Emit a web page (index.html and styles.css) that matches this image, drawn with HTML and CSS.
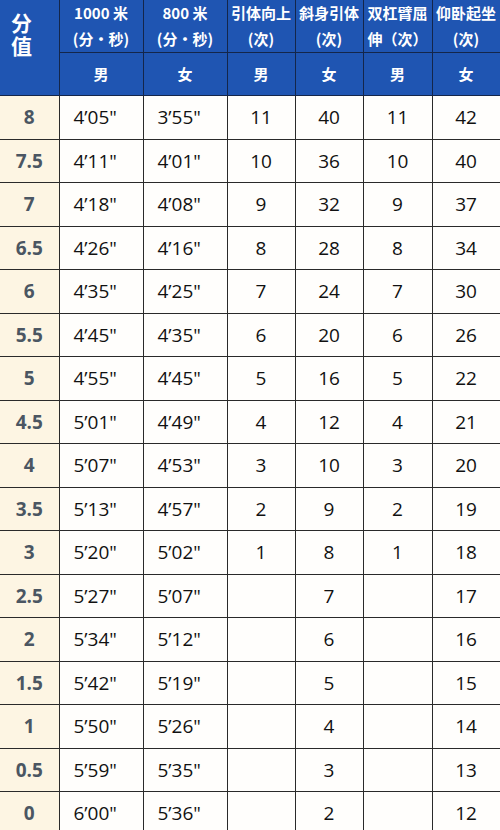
FILE: index.html
```html
<!DOCTYPE html>
<html lang="zh">
<head>
<meta charset="utf-8">
<link rel="stylesheet" href="styles.css">
</head>
<body>
<table class="score">
  <colgroup>
    <col class="c0"><col class="c1"><col class="c2"><col class="c3"><col class="c4"><col class="c5"><col class="c6">
  </colgroup>
  <thead>
    <tr class="h1">
      <th rowspan="2" class="corner">分<br>值</th>
      <th>1000 米<br>(分•秒)</th>
      <th>800 米<br>(分•秒)</th>
      <th>引体向上<br>(次)</th>
      <th>斜身引体<br>(次)</th>
      <th>双杠臂屈<br>伸（次）</th>
      <th>仰卧起坐<br>(次)</th>
    </tr>
    <tr class="h2">
      <th>男</th><th>女</th><th>男</th><th>女</th><th>男</th><th>女</th>
    </tr>
  </thead>
  <tbody>
    <tr><td class="pt">8</td><td class="t">4’05"</td><td class="t">3’55"</td><td>11</td><td>40</td><td>11</td><td>42</td></tr>
    <tr><td class="pt">7.5</td><td class="t">4’11"</td><td class="t">4’01"</td><td>10</td><td>36</td><td>10</td><td>40</td></tr>
    <tr><td class="pt">7</td><td class="t">4’18"</td><td class="t">4’08"</td><td>9</td><td>32</td><td>9</td><td>37</td></tr>
    <tr><td class="pt">6.5</td><td class="t">4’26"</td><td class="t">4’16"</td><td>8</td><td>28</td><td>8</td><td>34</td></tr>
    <tr><td class="pt">6</td><td class="t">4’35"</td><td class="t">4’25"</td><td>7</td><td>24</td><td>7</td><td>30</td></tr>
    <tr><td class="pt">5.5</td><td class="t">4’45"</td><td class="t">4’35"</td><td>6</td><td>20</td><td>6</td><td>26</td></tr>
    <tr><td class="pt">5</td><td class="t">4’55"</td><td class="t">4’45"</td><td>5</td><td>16</td><td>5</td><td>22</td></tr>
    <tr><td class="pt">4.5</td><td class="t">5’01"</td><td class="t">4’49"</td><td>4</td><td>12</td><td>4</td><td>21</td></tr>
    <tr><td class="pt">4</td><td class="t">5’07"</td><td class="t">4’53"</td><td>3</td><td>10</td><td>3</td><td>20</td></tr>
    <tr><td class="pt">3.5</td><td class="t">5’13"</td><td class="t">4’57"</td><td>2</td><td>9</td><td>2</td><td>19</td></tr>
    <tr><td class="pt">3</td><td class="t">5’20"</td><td class="t">5’02"</td><td>1</td><td>8</td><td>1</td><td>18</td></tr>
    <tr><td class="pt">2.5</td><td class="t">5’27"</td><td class="t">5’07"</td><td></td><td>7</td><td></td><td>17</td></tr>
    <tr><td class="pt">2</td><td class="t">5’34"</td><td class="t">5’12"</td><td></td><td>6</td><td></td><td>16</td></tr>
    <tr><td class="pt">1.5</td><td class="t">5’42"</td><td class="t">5’19"</td><td></td><td>5</td><td></td><td>15</td></tr>
    <tr><td class="pt">1</td><td class="t">5’50"</td><td class="t">5’26"</td><td></td><td>4</td><td></td><td>14</td></tr>
    <tr><td class="pt">0.5</td><td class="t">5’59"</td><td class="t">5’35"</td><td></td><td>3</td><td></td><td>13</td></tr>
    <tr><td class="pt">0</td><td class="t">6’00"</td><td class="t">5’36"</td><td></td><td>2</td><td></td><td>12</td></tr>
  </tbody>
</table>
</body>
</html>
```
FILE: styles.css
```css
html, body {
  margin: 0;
  padding: 0;
  background: #ffffff;
}
.score {
  border-collapse: collapse;
  table-layout: fixed;
  width: 500px;
  font-family: "Open Sans", "Noto Sans CJK SC", sans-serif;
}
.c0 { width: 59px; }
.c1 { width: 84px; }
.c2 { width: 84px; }
.c3 { width: 68px; }
.c4 { width: 68px; }
.c5 { width: 69px; }
.c6 { width: 68px; }

.score th {
  background: #1f55b2;
  color: #ffffff;
  font-family: "Noto Sans CJK SC", sans-serif;
  font-weight: 700;
  font-size: 15px;
  line-height: 26px;
  border: 1px solid #14264a;
  padding: 0;
  text-align: center;
}
.score thead tr:first-child th { border-top: none; }
.score tr > *:first-child { border-left: none; }
.h1 { height: 52px; }
.h2 { height: 43px; }
.score th.corner {
  font-size: 21px;
  line-height: 23px;
  text-align: left;
  vertical-align: top;
  padding: 11px 0 0 11px;
}
.score td {
  height: 42.5px;
  border: 1px solid #2a2a2a;
  padding: 0;
  text-align: center;
  font-size: 19px;
  color: #111111;
  background: #fffefc;
}
.score td.t {
  text-align: left;
  padding-left: 14px;
}
.score td.pt {
  background: #fdf5e3;
  color: #4b5662;
  font-weight: 700;
}
```
